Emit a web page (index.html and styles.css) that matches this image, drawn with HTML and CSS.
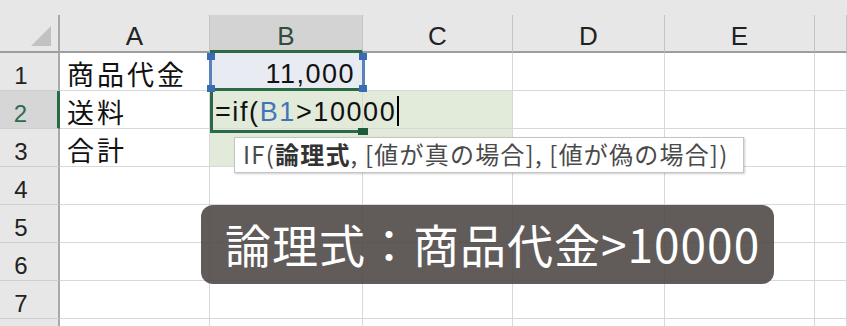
FILE: index.html
```html
<!DOCTYPE html>
<html lang="ja">
<head>
<meta charset="utf-8">
<title>Excel IF</title>
<link rel="stylesheet" href="styles.css">
</head>
<body>
<div class="sheet">
  <div class="topstrip"></div>
  <div class="grid">
    <div class="corner"><span class="tri"></span></div>
    <div class="colhead">A</div>
    <div class="colhead sel">B</div>
    <div class="colhead">C</div>
    <div class="colhead">D</div>
    <div class="colhead">E</div>
    <div class="colhead"></div>

    <div class="rowhead">1</div>
    <div class="cell jp">商品代金</div>
    <div class="cell num b1">11,000</div>
    <div class="cell"></div>
    <div class="cell"></div>
    <div class="cell"></div>
    <div class="cell"></div>

    <div class="rowhead sel">2</div>
    <div class="cell jp">送料</div>
    <div class="cell green edit">=if(<span class="ref">B1</span>&gt;10000<span class="caret"></span></div>
    <div class="cell green"></div>
    <div class="cell"></div>
    <div class="cell"></div>
    <div class="cell"></div>

    <div class="rowhead">3</div>
    <div class="cell jp">合計</div>
    <div class="cell green"></div>
    <div class="cell green"></div>
    <div class="cell"></div>
    <div class="cell"></div>
    <div class="cell"></div>

    <div class="rowhead">4</div>
    <div class="cell"></div><div class="cell"></div><div class="cell"></div><div class="cell"></div><div class="cell"></div><div class="cell"></div>
    <div class="rowhead">5</div>
    <div class="cell"></div><div class="cell"></div><div class="cell"></div><div class="cell"></div><div class="cell"></div><div class="cell"></div>
    <div class="rowhead">6</div>
    <div class="cell"></div><div class="cell"></div><div class="cell"></div><div class="cell"></div><div class="cell"></div><div class="cell"></div>
    <div class="rowhead">7</div>
    <div class="cell"></div><div class="cell"></div><div class="cell"></div><div class="cell"></div><div class="cell"></div><div class="cell"></div>
    <div class="rowhead"></div>
    <div class="cell"></div><div class="cell"></div><div class="cell"></div><div class="cell"></div><div class="cell"></div><div class="cell"></div>
  </div>

  <div class="active"><span class="handle"></span></div>
  <div class="range">
    <span class="sq tl"></span><span class="sq tr"></span>
    <span class="sq bl"></span><span class="sq br"></span>
  </div>

  <div class="tip">IF(<b>論理式</b>, [値が真の場合], [値が偽の場合])</div>

  <div class="caption">論理式：商品代金&gt;10000</div>
</div>
</body>
</html>
```

FILE: styles.css
```css
html, body {
  margin: 0;
  padding: 0;
  background: #ffffff;
}
body {
  width: 847px;
  height: 326px;
  overflow: hidden;
  font-family: "Liberation Sans", "Noto Sans CJK JP", sans-serif;
}
.sheet {
  position: relative;
  width: 847px;
  height: 326px;
  overflow: hidden;
}
.topstrip {
  height: 15px;
  background: #e7e7e7;
}
.grid {
  display: grid;
  grid-template-columns: 60px 150px 153px 150px 152px 150px 1fr;
  grid-template-rows: repeat(9, 38px);
}
.corner {
  background: #e7e7e7;
  border-right: 2px solid #a9a9a9;
  border-bottom: 2px solid #9d9d9d;
  box-sizing: border-box;
  position: relative;
}
.tri {
  position: absolute;
  right: 7px;
  bottom: 5px;
  width: 0;
  height: 0;
  border-left: 20px solid transparent;
  border-bottom: 20px solid #c2c2c2;
}
.colhead {
  background: #e7e7e7;
  border-right: 1px solid #c3c3c3;
  border-bottom: 2px solid #9d9d9d;
  box-sizing: border-box;
  display: flex;
  align-items: center;
  justify-content: center;
  padding-top: 7px;
  font-size: 26px;
  font-weight: 300;
  color: #222;
}
.colhead.sel {
  background: #d3d3d3;
  border-bottom: 3px solid #2a6a47;
  color: #2e4e3e;
}
.rowhead {
  background: #e7e7e7;
  border-right: 2px solid #a9a9a9;
  border-bottom: 1px solid #cfcfcf;
  box-sizing: border-box;
  display: flex;
  align-items: center;
  justify-content: center;
  padding-right: 16px;
  padding-top: 8px;
  font-size: 24px;
  color: #222;
}
.rowhead.sel {
  background: #d6d6d6;
  border-right: 3px solid #2a6a47;
  color: #2f6a50;
}
.cell {
  border-right: 1px solid #d8d8d8;
  border-bottom: 1px solid #d8d8d8;
  box-sizing: border-box;
  display: flex;
  align-items: center;
  font-size: 27px;
  color: #111;
  white-space: nowrap;
  padding-top: 6px;
}
.cell.jp {
  font-family: "Noto Sans CJK JP", sans-serif;
  font-size: 27px;
  letter-spacing: 3px;
  padding-left: 7px;
  padding-top: 4px;
}
.cell.num {
  justify-content: flex-end;
  padding-right: 7px;
  letter-spacing: 1.5px;
}
.cell.b1 {
  background: #e9ebf3;
}
.cell.green {
  background: #e2ead9;
}
.cell.edit {
  position: relative;
  z-index: 1;
  overflow: visible;
  padding-left: 5px;
  letter-spacing: 1.6px;
}
.ref {
  color: #4474b8;
}
.caret {
  flex: none;
  width: 2px;
  height: 30px;
  background: #000;
  margin-left: 1px;
  margin-top: -4px;
}
.active {
  position: absolute;
  z-index: 2;
  left: 210px;
  top: 88px;
  width: 153px;
  height: 45px;
  box-sizing: border-box;
  border-top: 3px solid #2a6a47;
  border-left: 3px solid #2a6a47;
  border-bottom: 3px solid #2a6a47;
}
.handle {
  position: absolute;
  right: -5px;
  bottom: -5px;
  width: 10px;
  height: 7px;
  background: #1f5c3d;
}
.range {
  position: absolute;
  z-index: 3;
  left: 209px;
  top: 55px;
  width: 156px;
  height: 34px;
  box-sizing: border-box;
  border-left: 3px solid #5a82bf;
  border-right: 3px solid #5a82bf;
}
.sq {
  position: absolute;
  width: 8px;
  height: 7px;
  background: #3a6cb4;
}
.sq.tl { left: -5px; top: -2px; }
.sq.tr { right: -5px; top: -2px; }
.sq.bl { left: -5px; bottom: -3px; }
.sq.br { right: -5px; bottom: -3px; }
.tip {
  position: absolute;
  z-index: 4;
  left: 234px;
  top: 137px;
  width: 510px;
  height: 36px;
  box-sizing: border-box;
  background: #ffffff;
  border: 1px solid #c4c4c4;
  box-shadow: 1px 1px 2px rgba(0, 0, 0, 0.2);
  font-family: "Noto Sans CJK JP", sans-serif;
  font-size: 24px;
  letter-spacing: 1.2px;
  line-height: 32px;
  color: #4a4a4a;
  padding-left: 8px;
  white-space: nowrap;
}
.tip b {
  font-weight: 700;
  color: #333;
}
.caption {
  position: absolute;
  z-index: 5;
  left: 201px;
  top: 205px;
  width: 573px;
  height: 79px;
  box-sizing: border-box;
  border-radius: 12px;
  background: rgba(75, 70, 67, 0.88);
  color: #ffffff;
  font-family: "Noto Sans CJK JP", sans-serif;
  font-size: 46px;
  letter-spacing: 1px;
  line-height: 76px;
  padding-left: 24px;
  white-space: nowrap;
}
```
